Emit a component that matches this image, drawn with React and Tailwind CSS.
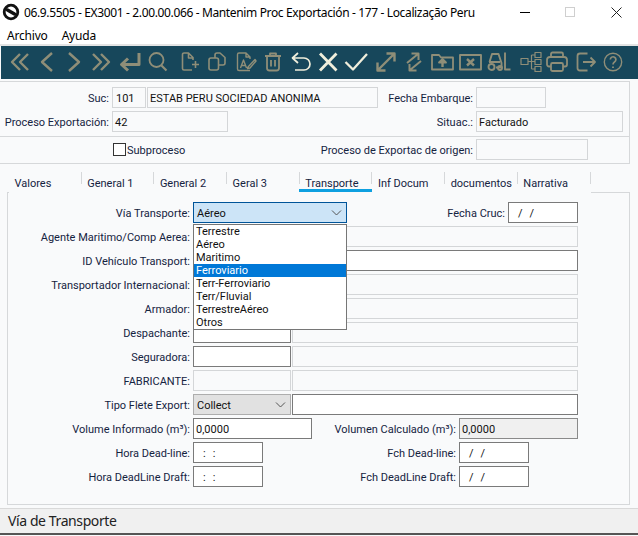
const TAN = "#8f8e78";
const LIGHT = "#f0eedb";

const icons = [
  { c: "ml-[6px]", s: TAN, w: 2.4, d: <path d="M13 4L5 12L13 20M21 4L13 12L21 20" /> },
  { c: "ml-[4px]", s: TAN, w: 2.4, d: <path d="M17 3L7 12L17 21" /> },
  { c: "ml-[3px]", s: TAN, w: 2.4, d: <path d="M7 3L17 12L7 21" /> },
  { c: "ml-[4px]", s: TAN, w: 2.4, d: <path d="M11 4L19 12L11 20M3 4L11 12L3 20" /> },
  { c: "ml-[4px]", s: TAN, w: 3, d: <path d="M21 3V14.5H4M10 8.5L3.5 14.5L10 20.5" /> },
  { c: "ml-[4px]", s: TAN, w: 1.8, d: <><circle cx="10.5" cy="10" r="7" /><path d="M15.5 15.5L20.5 20.5" strokeWidth="2.2" /></> },
  { c: "ml-[8px]", s: TAN, w: 1.6, d: <path d="M15 10V7.5L10.5 3H6A1.5 1.5 0 0 0 4.5 4.5V18.5A1.5 1.5 0 0 0 6 20H14M10.5 3V8H15M14 14.5H21M17.5 11V18" /> },
  { c: "ml-[3px]", s: TAN, w: 1.6, d: <><rect x="4" y="8" width="9.5" height="12" rx="2" /><path d="M10 8V5A2 2 0 0 1 12 3H15L20 7.5V13A2 2 0 0 1 18 15H13.5" /></> },
  { c: "ml-[5px]", s: TAN, w: 1.4, d: <path d="M16 9V7L12 3H5A1.5 1.5 0 0 0 3.5 4.5V19A1.5 1.5 0 0 0 5 20.5H16M12 3V7H16M6.5 18L9.5 10L12.5 18M7.5 15.5H11.5M14 17L21 9.5L22 11L16 18L13.5 18.5Z" /> },
  { c: "ml-[3px]", s: TAN, w: 1.8, d: <path d="M4 6H20M9 6V3.5H15V6M6 6V18A2.5 2.5 0 0 0 8.5 20.5H15.5A2.5 2.5 0 0 0 18 18V6M10 10V16.5M14 10V16.5" /> },
  { c: "ml-[4px]", s: LIGHT, w: 1.7, d: <path d="M9 3L3.5 8L9 13M3.5 8H15A6 6 0 0 1 15 20H6" /> },
  { c: "ml-[3px]", s: LIGHT, w: 2.8, d: <path d="M4 3.5L20.5 20.5M20.5 3.5L4 20.5" /> },
  { c: "ml-[4px]", s: LIGHT, w: 2.3, d: <path d="M1.5 12L9 19.5L23 4" /> },
  { c: "ml-[6px]", s: TAN, w: 2.4, d: <path d="M4 20L20 4M12.5 3.5H20.5V11.5M3.5 12.5V20.5H11.5" /> },
  { c: "ml-[4px]", s: TAN, w: 2, d: <path d="M5 13L16 4M9.5 3.5H16.5V10M19 11L8 20M14.5 20.5H7.5V14" /> },
  { c: "ml-[4px]", s: TAN, w: 1.8, d: <><path d="M2 19.5V5H9L11 7.5H23V19.5Z" /><path d="M12.5 17V12" strokeWidth="2.4" /><path d="M9 12.5L12.5 9L16 12.5Z" fill={TAN} /></> },
  { c: "ml-[4px]", s: TAN, w: 1.9, d: <><rect x="2" y="5" width="21" height="14.5" /><path d="M9 9L16 15.5M16 9L9 15.5" strokeWidth="2.4" /></> },
  { c: "ml-[4px]", s: TAN, w: 1.9, d: <><path d="M3.5 12L6 4H12.5L15.5 13V17.5H10M3 12H14" /><circle cx="5.5" cy="17" r="3" /><circle cx="14" cy="18" r="2" /><path d="M19 2.5V19.5H24.5" /></> },
  { c: "ml-[9px]", s: TAN, w: 1.2, d: <><rect x="2" y="8.5" width="7" height="6" /><rect x="16" y="2.5" width="6" height="5" /><rect x="16" y="9.5" width="6" height="5" /><rect x="16" y="16.5" width="6" height="5" /><path d="M9 11.5H16M12.5 5V19M12.5 5H16M12.5 19H16" /></> },
  { c: "ml-[2px]", s: TAN, w: 1.8, d: <><path d="M6 7V4A1.5 1.5 0 0 1 7.5 2.5H16.5A1.5 1.5 0 0 1 18 4V7M6 16.5H4A2 2 0 0 1 2 14.5V10A3 3 0 0 1 5 7H19A3 3 0 0 1 22 10V14.5A2 2 0 0 1 20 16.5H18" /><rect x="6" y="13" width="12" height="8" rx="1.5" /></> },
  { c: "ml-[5px]", s: TAN, w: 1.8, d: <path d="M13.5 3.5H6A2.5 2.5 0 0 0 3.5 6V18A2.5 2.5 0 0 0 6 20.5H13.5M9 12H21M16.5 7.5L21 12L16.5 16.5" /> },
  { c: "ml-[3px]", s: TAN, w: 1.4, d: <><circle cx="12" cy="12" r="8.7" /><path d="M9.3 9.5A2.8 2.8 0 1 1 13.5 12C12.4 12.7 12 13.2 12 14.5" strokeWidth="1.7" /><path d="M12 16.5V18" strokeWidth="1.8" /></> },
];

function Field({ w, kind = "off", children, className = "" }) {
  const styles = {
    off: "bg-[#f9fafb] border-[#d4d6d8]",
    on: "bg-white border-[#7a7a7a]",
    calc: "bg-[#f0f0f0] border-[#8a8a8a]",
  };
  return (
    <div className={`h-[21px] shrink-0 border pl-[2px] pt-[2px] flex items-center text-[#111] whitespace-nowrap overflow-hidden ${w} ${styles[kind]} ${className}`}>
      {children}
    </div>
  );
}

function Chevron({ className = "" }) {
  return (
    <svg width="11" height="6" viewBox="0 0 11 6" fill="none" stroke="#555" strokeWidth="1" className={className}>
      <path d="M1 0.5L5.5 5L10 0.5" />
    </svg>
  );
}

function Label({ w = "w-[182px]", children }) {
  return <div className={`${w} shrink-0 text-right text-[#15233f] whitespace-nowrap pt-[2px]`}>{children}</div>;
}

function Row({ label, children }) {
  return (
    <div className="flex items-center h-[21px] gap-[3px]">
      <Label>{label}</Label>
      {children}
    </div>
  );
}

function Mask({ ch }) {
  return (
    <>
      <span>{ch}</span>
      <span className="ml-[7px]">{ch}</span>
    </>
  );
}

const options = ["Terrestre", "Aéreo", "Maritimo", "Ferroviario", "Terr-Ferroviario", "Terr/Fluvial", "TerrestreAéreo", "Otros"];
const tabs = ["Valores", "General 1", "General 2", "Geral 3", "Transporte", "Inf Docum", "documentos", "Narrativa"];

export default function App() {
  return (
    <div className="w-[638px] h-[536px] overflow-hidden flex flex-col bg-[#f9fafb] text-[11px] leading-[14px] text-[#111] font-['Roboto',sans-serif]">
      {/* Title bar */}
      <div className="h-[24px] bg-white flex items-center shrink-0 text-[12px] font-['Noto_Sans',sans-serif]">
        <svg width="18" height="18" viewBox="0 0 18 18" className="ml-[2px]">
          <circle cx="9" cy="9" r="6.8" fill="white" stroke="#111" strokeWidth="2.8" />
          <path d="M5.5 7L12.5 11" stroke="#111" strokeWidth="3.4" strokeLinecap="round" />
        </svg>
        <div className="ml-[4px] pt-[2px] text-black whitespace-nowrap tracking-[-0.36px]">06.9.5505 - EX3001 - 2.00.00.066 - Mantenim Proc Exportación - 177 - Localização Peru</div>
        <div className="ml-auto flex items-center">
          <div className="w-[10px] h-px bg-black mr-[35px]" />
          <div className="w-[10px] h-[10px] border border-[#cfcfcf] mr-[36px]" />
          <svg width="11" height="11" viewBox="0 0 11 11" stroke="#222" strokeWidth="1" className="mr-[16px]">
            <path d="M0.5 0.5L10.5 10.5M10.5 0.5L0.5 10.5" />
          </svg>
        </div>
      </div>
      {/* Menu */}
      <div className="h-[20px] bg-white flex items-center pl-[7px] pt-[3px] gap-[14px] shrink-0 text-[12px] text-black font-['Noto_Sans',sans-serif] tracking-[-0.2px]">
        <span>Archivo</span>
        <span>Ayuda</span>
      </div>
      <div className="h-[2px] bg-[#e4e4e4] shrink-0" />
      {/* Toolbar */}
      <div className="h-[33px] ml-px bg-[#17475b] flex items-center pb-[2px] shrink-0">
        {icons.map((ic, i) => (
          <svg key={i} width="24" height="24" viewBox="0 0 24 24" fill="none" stroke={ic.s} strokeWidth={ic.w} strokeLinejoin="round" className={`shrink-0 overflow-visible ${ic.c}`}>
            {ic.d}
          </svg>
        ))}
      </div>
      <div className="h-[2px] shrink-0" />
      {/* Header panel */}
      <div className="w-[630px] border-y border-r border-[#d6d8da] shrink-0">
        <div className="pt-[5px] pb-[4px] flex flex-col gap-[3px] border-b border-[#d6d8da]">
          <div className="flex items-center h-[21px]">
            <div className="w-[473px] shrink-0 flex items-center">
              <Label w="w-[109px]">Suc:</Label>
              <Field w="w-[34px]" className="ml-[3px] pl-[3px]">101</Field>
              <Field w="w-[231px]" className="ml-px">ESTAB PERU SOCIEDAD ANONIMA</Field>
              <div className="flex-1 text-right text-[#15233f] pt-[2px]">Fecha Embarque:</div>
            </div>
            <Field w="w-[70px]" className="ml-[3px]" />
          </div>
          <div className="flex items-center h-[21px]">
            <div className="w-[473px] shrink-0 flex items-center">
              <Label w="w-[109px]">Proceso Exportación:</Label>
              <Field w="w-[116px]" className="ml-[3px]">42</Field>
              <div className="flex-1 text-right text-[#15233f] pt-[2px]">Situac.:</div>
            </div>
            <Field w="w-[147px]" className="ml-[3px]">Facturado</Field>
          </div>
        </div>
        <div className="pt-[2px] pb-[3px] flex items-center">
          <div className="w-[473px] shrink-0 flex items-center">
            <div className="ml-[113px] w-[13px] h-[13px] border border-[#333] bg-white" />
            <span className="ml-px text-[#15233f] pt-[2px]">Subproceso</span>
            <div className="flex-1 text-right text-[#15233f] pt-[2px]">Proceso de Exportac de origen:</div>
          </div>
          <Field w="w-[112px]" className="ml-[3px]" />
        </div>
      </div>
      {/* Tabs */}
      <div className="flex pl-[9px] mt-[8px] relative z-10 -mb-px shrink-0">
        {tabs.map((t, i) => (
          <div key={t} className="w-[72.7px] h-[21px] bg-[#f9fafb] relative shrink-0 pl-[5.5px] pt-[5px] text-[#15233f]">
            {t}
            <div className="absolute right-0 top-0 w-px h-[12px] bg-[#d6d8da]" />
            {i === 4 && <div className="absolute left-[-1px] right-[-1px] bottom-[1px] h-[3px] bg-[#0ea0e0]" />}
          </div>
        ))}
      </div>
      {/* Content panel */}
      <div className="ml-[7px] w-[623px] h-[313px] border border-[#d6d8da] pt-[9px] flex flex-col gap-[3px] shrink-0">
        <Row label="Vía Transporte:">
          <div className="relative w-[154px] h-[21px] border border-[#005499] bg-[#cce4f7] flex items-center pl-[3px] pt-[2px] shrink-0">
            Aéreo
            <Chevron className="absolute right-[4px] top-[7px]" />
            <div className="absolute left-[-1px] top-[21px] w-[154px] border border-[#767676] bg-white z-20">
              {options.map((o) => (
                <div key={o} className={`h-[13px] pl-[2px] leading-[14px] ${o === "Ferroviario" ? "bg-[#0078d7] text-white" : "text-[#111]"}`}>{o}</div>
              ))}
            </div>
          </div>
          <div className="flex-1 text-right text-[#15233f] pt-[2px]">Fecha Cruc:</div>
          <Field w="w-[70px]" kind="on" className="mr-[51px] pl-[9px]"><Mask ch="/" /></Field>
        </Row>
        <Row label="Agente Maritimo/Comp Aerea:">
          <Field w="w-[98px]" />
          <Field w="w-[286px]" className="-ml-[2px]" />
        </Row>
        <Row label="ID Vehículo Transport:">
          <Field w="w-[98px]" kind="on" />
          <Field w="w-[286px]" kind="on" className="-ml-[2px]" />
        </Row>
        <Row label="Transportador Internacional:">
          <Field w="w-[98px]" />
          <Field w="w-[286px]" className="-ml-[2px]" />
        </Row>
        <Row label="Armador:">
          <Field w="w-[98px]" />
          <Field w="w-[286px]" className="-ml-[2px]" />
        </Row>
        <Row label="Despachante:">
          <Field w="w-[98px]" kind="on" />
          <Field w="w-[286px]" className="-ml-[2px]" />
        </Row>
        <Row label="Seguradora:">
          <Field w="w-[98px]" kind="on" />
          <Field w="w-[286px]" className="-ml-[2px]" />
        </Row>
        <Row label="FABRICANTE:">
          <Field w="w-[98px]" />
          <Field w="w-[286px]" className="-ml-[2px]" />
        </Row>
        <Row label="Tipo Flete Export:">
          <div className="relative w-[98px] h-[21px] border border-[#adadad] bg-[#e1e1e1] flex items-center pl-[3px] pt-[2px] shrink-0">
            Collect
            <Chevron className="absolute right-[4px] top-[7px]" />
          </div>
          <Field w="w-[286px]" kind="on" className="-ml-[2px]" />
        </Row>
        <Row label="Volume Informado (m³):">
          <Field w="w-[119px]" kind="on">0,0000</Field>
          <div className="w-[141px] shrink-0 text-right text-[#15233f] whitespace-nowrap pt-[2px]">Volumen Calculado (m³):</div>
          <Field w="w-[119px]" kind="calc">0,0000</Field>
        </Row>
        <Row label="Hora Dead-line:">
          <Field w="w-[70px]" kind="on" className="pl-[9px]"><Mask ch=":" /></Field>
          <div className="w-[190px] shrink-0 text-right text-[#15233f] whitespace-nowrap pt-[2px]">Fch Dead-line:</div>
          <Field w="w-[70px]" kind="on" className="pl-[9px]"><Mask ch="/" /></Field>
        </Row>
        <Row label="Hora DeadLine Draft:">
          <Field w="w-[70px]" kind="on" className="pl-[9px]"><Mask ch=":" /></Field>
          <div className="w-[190px] shrink-0 text-right text-[#15233f] whitespace-nowrap pt-[2px]">Fch DeadLine Draft:</div>
          <Field w="w-[70px]" kind="on" className="pl-[9px]"><Mask ch="/" /></Field>
        </Row>
      </div>
      {/* Status */}
      <div className="mt-[3px] border-t border-[#d9d9d9] bg-[#f0f0f0] h-[25px] pl-[8px] flex items-center text-[14px] tracking-[-0.4px] text-[#222] shrink-0 font-['Noto_Sans',sans-serif]">
        Vía de Transporte
      </div>
      <div className="h-[2px] bg-[#555] shrink-0" />
    </div>
  );
}
